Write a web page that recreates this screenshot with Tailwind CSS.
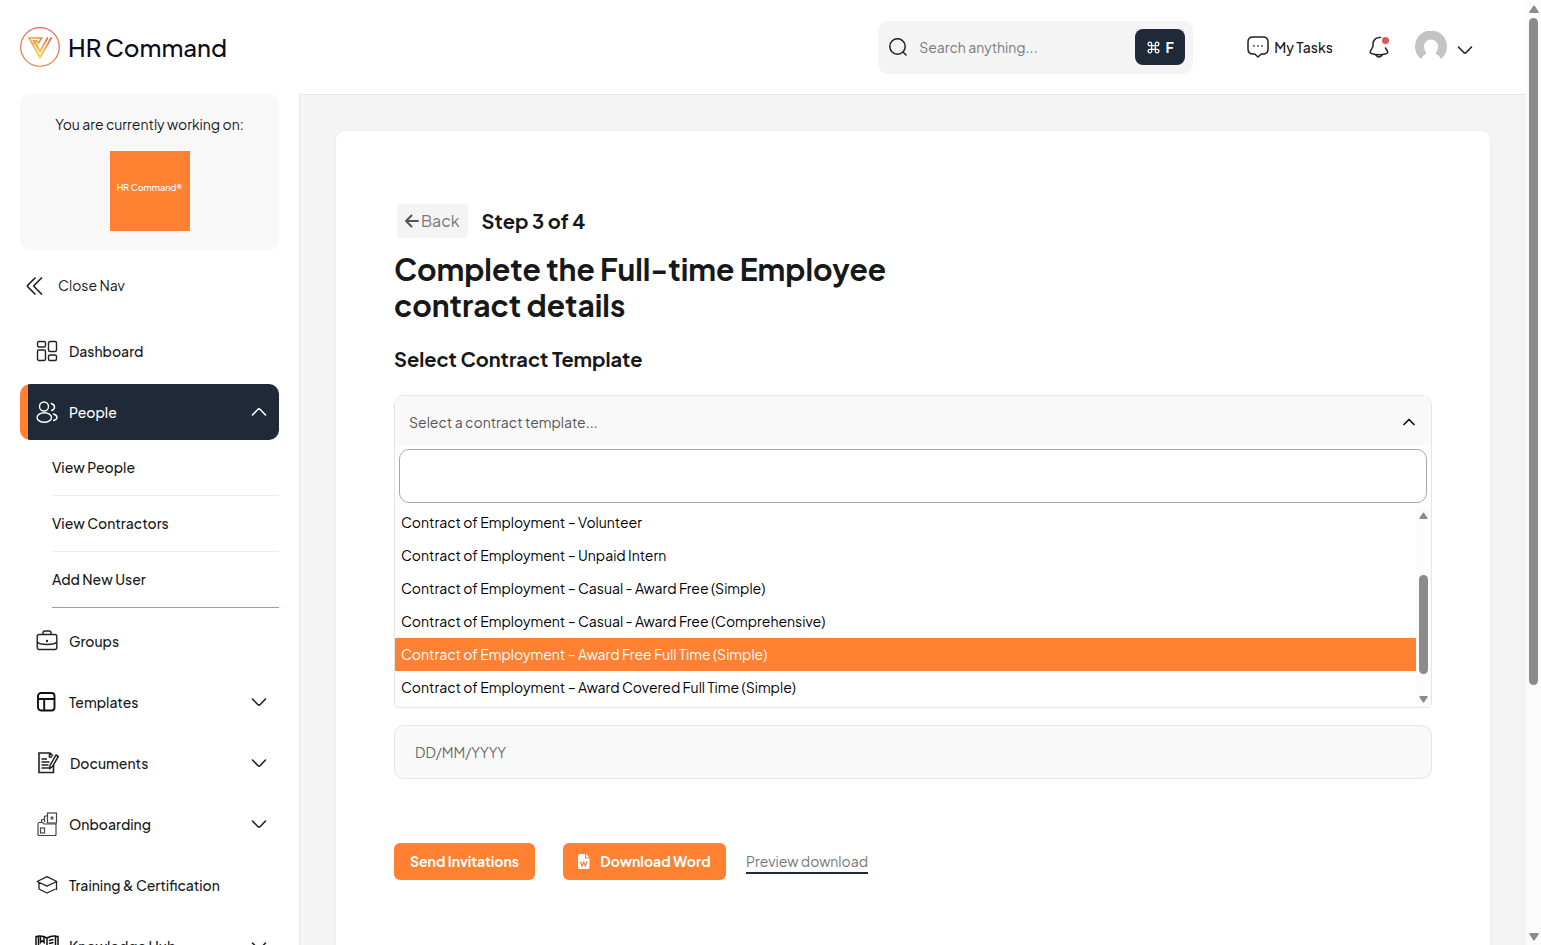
<!DOCTYPE html>
<html lang="en">
<head>
    <meta charset="UTF-8">
    <meta name="viewport" content="width=device-width, initial-scale=1.0">
    <title>HR Command - Contract details</title>
    <script src="https://cdn.jsdelivr.net/npm/@tailwindcss/browser@4"></script>
    <style>
        body { font-family: 'Plus Jakarta Sans', 'Inter', sans-serif; }
    </style>
</head>
<body class="flex h-screen overflow-hidden bg-white text-sm text-[#17181a]">
    <div class="flex min-w-0 flex-1 flex-col">
        <!-- Header -->
        <header class="flex h-[94px] shrink-0 items-center justify-between pl-5 pr-[53px]">
            <a href="#" class="flex items-center gap-2">
                <svg class="size-10" viewBox="0 0 40 40" fill="none">
                    <defs>
                        <linearGradient id="ring" x1="0" y1="0" x2="0" y2="1"><stop stop-color="#e0685a"/><stop offset="1" stop-color="#f08a4a"/></linearGradient>
                        <linearGradient id="mark" x1="1" y1="0" x2=".3" y2="1"><stop stop-color="#dd5f62"/><stop offset=".45" stop-color="#eda04c"/><stop offset="1" stop-color="#f6d93e"/></linearGradient>
                    </defs>
                    <circle cx="20" cy="20" r="19.3" stroke="url(#ring)" stroke-width="1.3"/>
                    <path d="M31.500 10.500L20 30.500L9 11H21.500L18.500 16L16.500 13.800H13.500L20 24.500L27.800 10.500M12 16.500L15.500 16.300L18 20" stroke="url(#mark)" stroke-width="1.700"/>
                </svg>
                <span class="text-2xl font-medium text-[#0b0b1c]">HR Command</span>
            </a>
            <div class="flex items-center">
                <form class="flex h-[53px] w-[315px] items-center rounded-[10px] bg-[#f4f4f4] pl-[11px] pr-2">
                    <svg class="size-5 shrink-0" viewBox="0 0 20 20" fill="none" stroke="#222" stroke-width="1.5" stroke-linecap="round"><circle cx="8.500" cy="9.500" r="7.700"/><path d="M14.500 15.500l2.500 2.500"/></svg>
                    <input type="text" aria-label="Search" placeholder="Search anything..." class="ml-[10px] min-w-0 flex-1 outline-none placeholder:text-[#7b7b7b]">
                    <button type="button" class="flex h-9 w-[50px] items-center justify-center gap-[6px] rounded-lg bg-[#1f2937] font-bold text-white">
                        <svg class="size-[13px]" viewBox="0 0 14 14" fill="none" stroke="currentColor" stroke-width="1.400"><path d="M5 5V3.200A1.900 1.900 0 1 0 3.200 5H10.800A1.900 1.900 0 1 0 9 3.200V10.800A1.900 1.900 0 1 0 10.800 9H3.200A1.900 1.900 0 1 0 5 10.800Z"/></svg>
                        F
                    </button>
                </form>
                <a href="#" class="ml-[54px] flex items-center gap-[5px] font-medium">
                    <svg class="size-[22px]" viewBox="0 0 22 22" fill="none" stroke="#222" stroke-width="1.500" stroke-linejoin="round"><path d="M6 1H16Q21 1 21 6V13Q21 18 16 18H14.200L11 21L7.800 18H6Q1 18 1 13V6Q1 1 6 1Z"/><path d="M6.200 10h1.500M10.200 10h1.500M14.200 10h1.500" stroke-width="1.700"/></svg>
                    My Tasks
                </a>
                <button type="button" aria-label="Notifications" class="ml-[34px]">
                    <svg class="size-6" viewBox="0 0 24 24" fill="none" stroke="#222" stroke-width="1.500" stroke-linecap="round" stroke-linejoin="round"><path d="M13.500 2.500A6.500 6.500 0 0 0 6 8.800V11.500L3.400 16.200Q2.700 18 4.600 18.600Q12 21 19.400 18.600Q21.300 18 20.400 16.200L18.500 13"/><path d="M8.800 20Q12 24 15.200 20"/><circle cx="18.500" cy="5.500" r="3.500" fill="#e05555" stroke="none"/></svg>
                </button>
                <button type="button" aria-label="Account" class="ml-6 flex items-center gap-[10px]">
                    <svg class="size-8" viewBox="0 0 32 32"><path d="M6 28A16 16 0 1 1 26 28Q24.500 24.500 20.500 22.500Q23 19.500 23 15.500A7 7 0 0 0 9 15.500Q9 19.500 11.500 22.500Q7.500 24.500 6 28Z" fill="#c4c4c4"/></svg>
                    <svg class="mt-[6px] size-4" viewBox="0 0 16 16" fill="none" stroke="#222" stroke-width="1.600" stroke-linecap="round" stroke-linejoin="round"><path d="M1.500 5L7 10.700Q8 11.500 9 10.700L14.500 5"/></svg>
                </button>
            </div>
        </header>

        <div class="flex min-h-0 flex-1">
            <!-- Sidebar -->
            <aside class="w-[299px] shrink-0 overflow-hidden px-5">
                <div class="flex h-[156px] flex-col items-center rounded-[10px] bg-[#f8f8f8] pt-5">
                    <p class="leading-5">You are currently working on:</p>
                    <div class="mt-[17px] flex size-20 items-center justify-center bg-[#ff8131] pb-[6px] text-[9px] font-medium text-white">HR Command®</div>
                </div>
                <button type="button" class="mt-[21px] flex h-7 items-center gap-[13px] pl-[5px]">
                    <svg class="size-5" viewBox="0 0 20 20" fill="none" stroke="#222" stroke-width="1.700" stroke-linecap="round" stroke-linejoin="round"><path d="M10 3L3 10Q2 11 3 12L10 19M16.500 3L9.500 10Q8.500 11 9.500 12L16.500 19"/></svg>
                    Close Nav
                </button>
                <nav class="mt-6 flex flex-col gap-[5px] font-medium">
                    <a href="#" class="flex h-14 shrink-0 items-center gap-[11px] pl-4">
                        <svg class="size-[22px]" viewBox="0 0 22 22" fill="none" stroke="#222" stroke-width="1.400"><rect x="1.500" y="1.500" width="8" height="5.500" rx="1.500"/><rect x="12.500" y="1.500" width="8" height="10" rx="1.500"/><rect x="1.500" y="10" width="8" height="10.500" rx="1.500"/><rect x="12.500" y="15" width="8" height="5.500" rx="1.500"/></svg>
                        Dashboard
                    </a>
                    <div>
                        <a href="#" class="flex h-14 items-center gap-[11px] rounded-[10px] bg-linear-to-r from-[#ff8131] from-[8px] to-[#1f2937] to-[8px] pl-4 pr-3 text-white">
                            <svg class="size-[22px]" viewBox="0 0 22 22" fill="none" stroke="currentColor" stroke-width="1.400" stroke-linecap="round"><circle cx="8" cy="5.500" r="4.500"/><ellipse cx="8.300" cy="16.500" rx="7.200" ry="4.800"/><path d="M15.200 2.500Q18.500 3.500 18.500 6Q18.500 8.500 15.700 9.500M17.500 13Q21 14 21 16.500Q20.500 19 17.500 19.500"/></svg>
                            <span class="flex-1">People</span>
                            <svg class="size-4" viewBox="0 0 16 16" fill="none" stroke="currentColor" stroke-width="1.600" stroke-linecap="round" stroke-linejoin="round"><path d="M1.500 11L7 5.300Q8 4.500 9 5.300L14.500 11"/></svg>
                        </a>
                        <div class="flex flex-col pl-8">
                            <a href="#" class="flex h-14 items-center border-b border-b-[#eeeeee] pb-[1px]">View People</a>
                            <a href="#" class="flex h-14 items-center border-b border-b-[#eeeeee] pb-[1px]">View Contractors</a>
                            <a href="#" class="flex h-14 items-center border-b border-b-[#f08a45] pb-[1px]">Add New User</a>
                        </div>
                    </div>
                    <a href="#" class="flex h-14 shrink-0 items-center gap-[11px] pl-4">
                        <svg class="size-[22px]" viewBox="0 0 22 22" fill="none" stroke="#222" stroke-width="1.400"><rect x="1.200" y="4.500" width="19.600" height="15" rx="2"/><path d="M7 4.500V3Q7 1 8.800 1H13.200Q15 1 15 3V4.500M1.200 12Q3 14.500 11 14.500Q19 14.500 20.800 12"/><circle cx="11" cy="11" r=".5"/></svg>
                        Groups
                    </a>
                    <a href="#" class="flex h-14 shrink-0 items-center gap-[11px] pl-4 pr-3">
                        <svg class="size-[22px]" viewBox="0 0 22 22" fill="none" stroke="#111" stroke-width="1.900"><rect x="2" y="2" width="16.500" height="17.500" rx="3"/><path d="M2 8H18.500M8.200 8V19.500"/></svg>
                        <span class="flex-1">Templates</span>
                        <svg class="size-4" viewBox="0 0 16 16" fill="none" stroke="#222" stroke-width="1.600" stroke-linecap="round" stroke-linejoin="round"><path d="M1.500 5L7 10.700Q8 11.500 9 10.700L14.500 5"/></svg>
                    </a>
                    <a href="#" class="flex h-14 shrink-0 items-center gap-[11px] pl-[17px] pr-3">
                        <svg class="size-[22px]" viewBox="0 0 22 22" fill="none" stroke="#222" stroke-width="1.600"><path d="M16.500 13V20.500H2V1H13L16 4M12.500 1.500V5H15"/><path d="M4.500 7H10M4.500 10H12.500M4.500 13H11.500M4.500 16H12" stroke-width="1.300"/><path d="M19 3L21.300 4.500L15.500 14.500L12.800 16.500L13 13.500Z" stroke-width="1.500"/></svg>
                        <span class="flex-1">Documents</span>
                        <svg class="size-4" viewBox="0 0 16 16" fill="none" stroke="#222" stroke-width="1.600" stroke-linecap="round" stroke-linejoin="round"><path d="M1.500 5L7 10.700Q8 11.500 9 10.700L14.500 5"/></svg>
                    </a>
                    <a href="#" class="flex h-14 shrink-0 items-center gap-[11px] pl-4 pr-3">
                        <svg class="h-6 w-[22px]" viewBox="0 0 22 24" fill="none" stroke="#444" stroke-width="1.200"><path d="M2 12Q2 10.500 3.500 10.500H6.500L8 12H20V22.500Q20 23.500 19 23.500H3Q2 23.500 2 22.500Z"/><rect x="4.500" y="16" width="4" height="5"/><rect x="11.500" y="1" width="9" height="10"/><path d="M16 4V8M14 6H18M11.500 3.500L8.500 4.500V10M8.500 7L5.500 8V10.500"/></svg>
                        <span class="flex-1">Onboarding</span>
                        <svg class="size-4" viewBox="0 0 16 16" fill="none" stroke="#222" stroke-width="1.600" stroke-linecap="round" stroke-linejoin="round"><path d="M1.500 5L7 10.700Q8 11.500 9 10.700L14.500 5"/></svg>
                    </a>
                    <a href="#" class="flex h-14 shrink-0 items-center gap-[11px] pl-4">
                        <svg class="size-[22px]" viewBox="0 0 22 22" fill="none" stroke="#222" stroke-width="1.300" stroke-linejoin="round"><path d="M1.200 7.500L11 2.700L20.800 7.500L11 12.200ZM3 8.500V15L11 19L19.500 15M20.500 7.500V16"/></svg>
                        Training &amp; Certification
                    </a>
                    <a href="#" class="flex h-14 shrink-0 items-center gap-[11px] pl-4 pr-3">
                        <svg class="size-[22px] overflow-visible" viewBox="0 0 22 22" fill="none" stroke="#111" stroke-width="1.500"><path d="M11 3Q7 .5 2.500 1V15Q8 14.500 11 17Q14 14.500 19.500 15V1Q15 .5 11 3V17M2.500 1.500H0V18.500H22V1.500H19.500"/><path d="M4.500 1V7.500L6.300 5.800L8 7.500V1M13 5.500L17.500 4.500M13 8.500L17.500 7.500M13 11.500L17.500 10.500M4.500 10.500L9 11.500"/></svg>
                        <span class="flex-1">Knowledge Hub</span>
                        <svg class="size-4" viewBox="0 0 16 16" fill="none" stroke="#222" stroke-width="1.600" stroke-linecap="round" stroke-linejoin="round"><path d="M1.500 5L7 10.700Q8 11.500 9 10.700L14.500 5"/></svg>
                    </a>
                </nav>
            </aside>

            <!-- Content -->
            <main class="min-w-0 flex-1 overflow-hidden border-l border-t border-[#e8e8e8] bg-[#f4f4f4] px-[35px] pt-[35px]">
                <section class="min-h-[900px] rounded-[10px] border border-[#ededed] bg-white px-[58px] pb-16 pt-[73px]">
                    <div class="flex items-center gap-[14px] pl-[3px]">
                        <a href="#" class="flex h-[34px] items-center gap-[2px] rounded bg-[#f4f4f4] px-2 text-base text-[#7a7a7a]">
                            <svg class="h-4 w-[14px]" viewBox="0 0 14 16" fill="none" stroke="#555" stroke-width="1.900" stroke-linecap="round" stroke-linejoin="round"><path d="M6.500 2.500L1 8L6.500 13.500M1 8H13"/></svg>
                            Back
                        </a>
                        <span class="text-xl font-bold">Step 3 of 4</span>
                    </div>
                    <h1 class="mt-[13px] max-w-[520px] text-[30px] font-bold leading-9">Complete the Full-time Employee contract details</h1>
                    <h2 class="mt-[22px] text-xl font-bold"><label for="template">Select Contract Template</label></h2>

                    <div class="mt-[22px] rounded-b rounded-t-[10px] border border-[#e5e5e5]">
                        <div class="grid items-center">
                            <select id="template" class="col-start-1 row-start-1 h-[49px] w-full appearance-none rounded-t-[9px] bg-[#f9f9f9] px-[14px] pt-[3px] text-[#555] outline-none">
                                <option>Select a contract template...</option>
                            </select>
                            <svg class="pointer-events-none col-start-1 row-start-1 mr-[15px] mt-[2px] size-[14px] justify-self-end" viewBox="0 0 14 14" fill="none" stroke="#111" stroke-width="1.700" stroke-linecap="round" stroke-linejoin="round"><path d="M2 9.500L7 4.500L12 9.500"/></svg>
                        </div>
                        <div class="p-1 pb-[3px]">
                            <input type="text" aria-label="Filter templates" class="block h-[54px] w-full rounded-[10px] border border-[#aaa] px-3 outline-none">
                        </div>
                        <div class="flex h-[201px]">
                            <ul role="listbox" aria-label="Contract templates" class="min-w-0 flex-1 overflow-hidden text-black">
                                <li role="option" class="h-[33px] px-[6px] leading-[33px]">Contract of Employment – Volunteer</li>
                                <li role="option" class="h-[33px] px-[6px] leading-[33px]">Contract of Employment – Unpaid Intern</li>
                                <li role="option" class="h-[33px] px-[6px] leading-[33px]">Contract of Employment – Casual - Award Free (Simple)</li>
                                <li role="option" class="h-[33px] px-[6px] leading-[33px]">Contract of Employment – Casual - Award Free (Comprehensive)</li>
                                <li role="option" aria-selected="true" class="h-[33px] bg-[#ff8131] px-[6px] leading-[33px] text-white">Contract of Employment – Award Free Full Time (Simple)</li>
                                <li role="option" class="h-[33px] px-[6px] leading-[33px]">Contract of Employment – Award Covered Full Time (Simple)</li>
                            </ul>
                            <div class="flex w-[15px] flex-col items-center bg-[#fcfcfc] pb-1 pt-[6px]">
                                <svg class="h-[7px] w-[9px]" viewBox="0 0 10 8" fill="#8b8b8b"><path d="M4.200 1Q5 0 5.800 1L9.500 6.500Q10 8 9 8H1Q0 8 .5 6.500Z"/></svg>
                                <div class="mt-14 h-[99px] w-[9px] rounded-full bg-[#8b8b8b]"></div>
                                <svg class="mt-auto h-[7px] w-[9px]" viewBox="0 0 10 8" fill="#8b8b8b"><path d="M4.200 7Q5 8 5.800 7L9.500 1.500Q10 0 9 0H1Q0 0 .5 1.500Z"/></svg>
                            </div>
                        </div>
                    </div>

                    <input type="text" aria-label="Date" placeholder="DD/MM/YYYY" class="mt-[17px] block h-[54px] w-full rounded-[10px] border border-[#e5e5e5] bg-[#f9f9f9] px-5 outline-none placeholder:text-[#6c6c6c]">

                    <div class="mt-16 flex items-center">
                        <button type="button" class="h-[37px] w-[141px] rounded-md bg-[#ff8131] pb-[2px] font-bold text-white">Send Invitations</button>
                        <button type="button" class="ml-7 flex h-[37px] w-[163px] items-center justify-center gap-[10px] rounded-md bg-[#ff8131] pb-[2px] font-bold text-white">
                            <svg class="mt-[2px] h-[15px] w-3" viewBox="0 0 12 15"><path d="M2 0H7V4.500H11.500V13Q11.500 15 9.500 15H2Q0 15 0 13V2Q0 0 2 0ZM8 0L11.500 3.500H8Z" fill="#fff"/><path d="M2.700 7.500L4 12L5.700 8L7.400 12L8.800 7.500" fill="none" stroke="#ff8131" stroke-width="1.200"/></svg>
                            Download Word
                        </button>
                        <a href="#" class="ml-5 border-b-2 border-[#1f2937] leading-[22px] text-[#777]">Preview download</a>
                    </div>
                </section>
            </main>
        </div>
    </div>

    <!-- Page scrollbar -->
    <div class="flex w-[15px] shrink-0 flex-col items-center bg-[#fcfcfc] pb-1 pt-[5px]">
        <svg class="h-2 w-[10px] shrink-0" viewBox="0 0 10 8" fill="#8b8b8b"><path d="M4.200 1Q5 0 5.800 1L9.500 6.500Q10 8 9 8H1Q0 8 .5 6.500Z"/></svg>
        <div class="flex flex-1 flex-col py-[5px]">
            <div class="w-[9px] flex-[11] rounded-full bg-[#8b8b8b]"></div>
            <div class="flex-[4]"></div>
        </div>
        <svg class="h-2 w-[10px] shrink-0" viewBox="0 0 10 8" fill="#8b8b8b"><path d="M4.200 7Q5 8 5.800 7L9.500 1.500Q10 0 9 0H1Q0 0 .5 1.500Z"/></svg>
    </div>
</body>
</html>
